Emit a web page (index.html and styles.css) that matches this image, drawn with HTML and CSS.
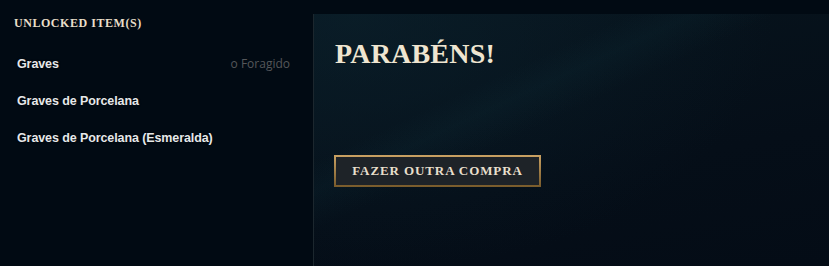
FILE: index.html
```html
<!DOCTYPE html>
<html lang="pt">
<head>
<meta charset="utf-8">
<title>Parabéns</title>
<link rel="stylesheet" href="styles.css">
</head>
<body>
<div class="page">
  <aside class="sidebar">
    <h2 class="sidebar-title">UNLOCKED ITEM(S)</h2>
    <ul class="items">
      <li class="item"><span class="item-name">Graves</span><span class="item-sub">o Foragido</span></li>
      <li class="item"><span class="item-name">Graves de Porcelana</span></li>
      <li class="item"><span class="item-name">Graves de Porcelana (Esmeralda)</span></li>
    </ul>
  </aside>
  <main class="main">
    <h1 class="title">PARABÉNS!</h1>
    <button class="btn" type="button">FAZER OUTRA COMPRA</button>
  </main>
</div>
</body>
</html>
```

FILE: styles.css
```css
html, body {
  margin: 0;
  padding: 0;
  height: 100%;
  background: #010a13;
}
.page {
  display: flex;
  height: 266px;
  overflow: hidden;
}
.sidebar {
  width: 313px;
  flex: none;
  padding: 16px 23px 0 14px;
  box-sizing: border-box;
  background: #010a13;
}
.sidebar-title {
  margin: 0;
  font-family: "Liberation Serif", serif;
  font-weight: bold;
  font-size: 12px;
  line-height: 14px;
  letter-spacing: 0.55px;
  color: #e9dfc9;
}
.items {
  list-style: none;
  margin: 15px 0 0 3px;
  padding: 0;
}
.item {
  display: flex;
  justify-content: space-between;
  align-items: center;
  height: 37px;
}
.item-name {
  font-family: "Liberation Sans", Arial, sans-serif;
  font-weight: bold;
  font-size: 12.5px;
  letter-spacing: -0.1px;
  color: #e6e8ea;
  text-shadow: 0 0 2px rgba(0,0,0,0.8);
}
.item-sub {
  font-family: "Open Sans", sans-serif;
  font-size: 12px;
  color: #55575a;
}
.main {
  flex: 1;
  margin-top: 14px;
  border-left: 1px solid #1c272e;
  padding: 24px 0 0 20px;
  background:
    linear-gradient(155deg, rgba(20,70,80,0) 30%, rgba(20,70,80,0.1) 36%, rgba(20,70,80,0) 44%),
    radial-gradient(ellipse 420px 260px at 40px 0px, rgba(12,36,48,0.55), rgba(12,36,48,0) 100%),
    linear-gradient(170deg, #07141d 0%, #050e18 60%, #040c16 100%);
}
.title {
  margin: 0 0 85px 1px;
  font-family: "Liberation Serif", serif;
  font-weight: bold;
  font-size: 28px;
  line-height: 32px;
  letter-spacing: 0.2px;
  color: #efe5d0;
}
.btn {
  display: block;
  width: 207px;
  height: 32px;
  padding: 0;
  border: 2px solid;
  border-image: linear-gradient(to bottom, #c8a062, #7a5c2c) 1;
  background: #1e2328;
  font-family: "Liberation Serif", serif;
  font-weight: bold;
  font-size: 13px;
  letter-spacing: 0.9px;
  color: #e8dfcc;
  cursor: pointer;
}
```
